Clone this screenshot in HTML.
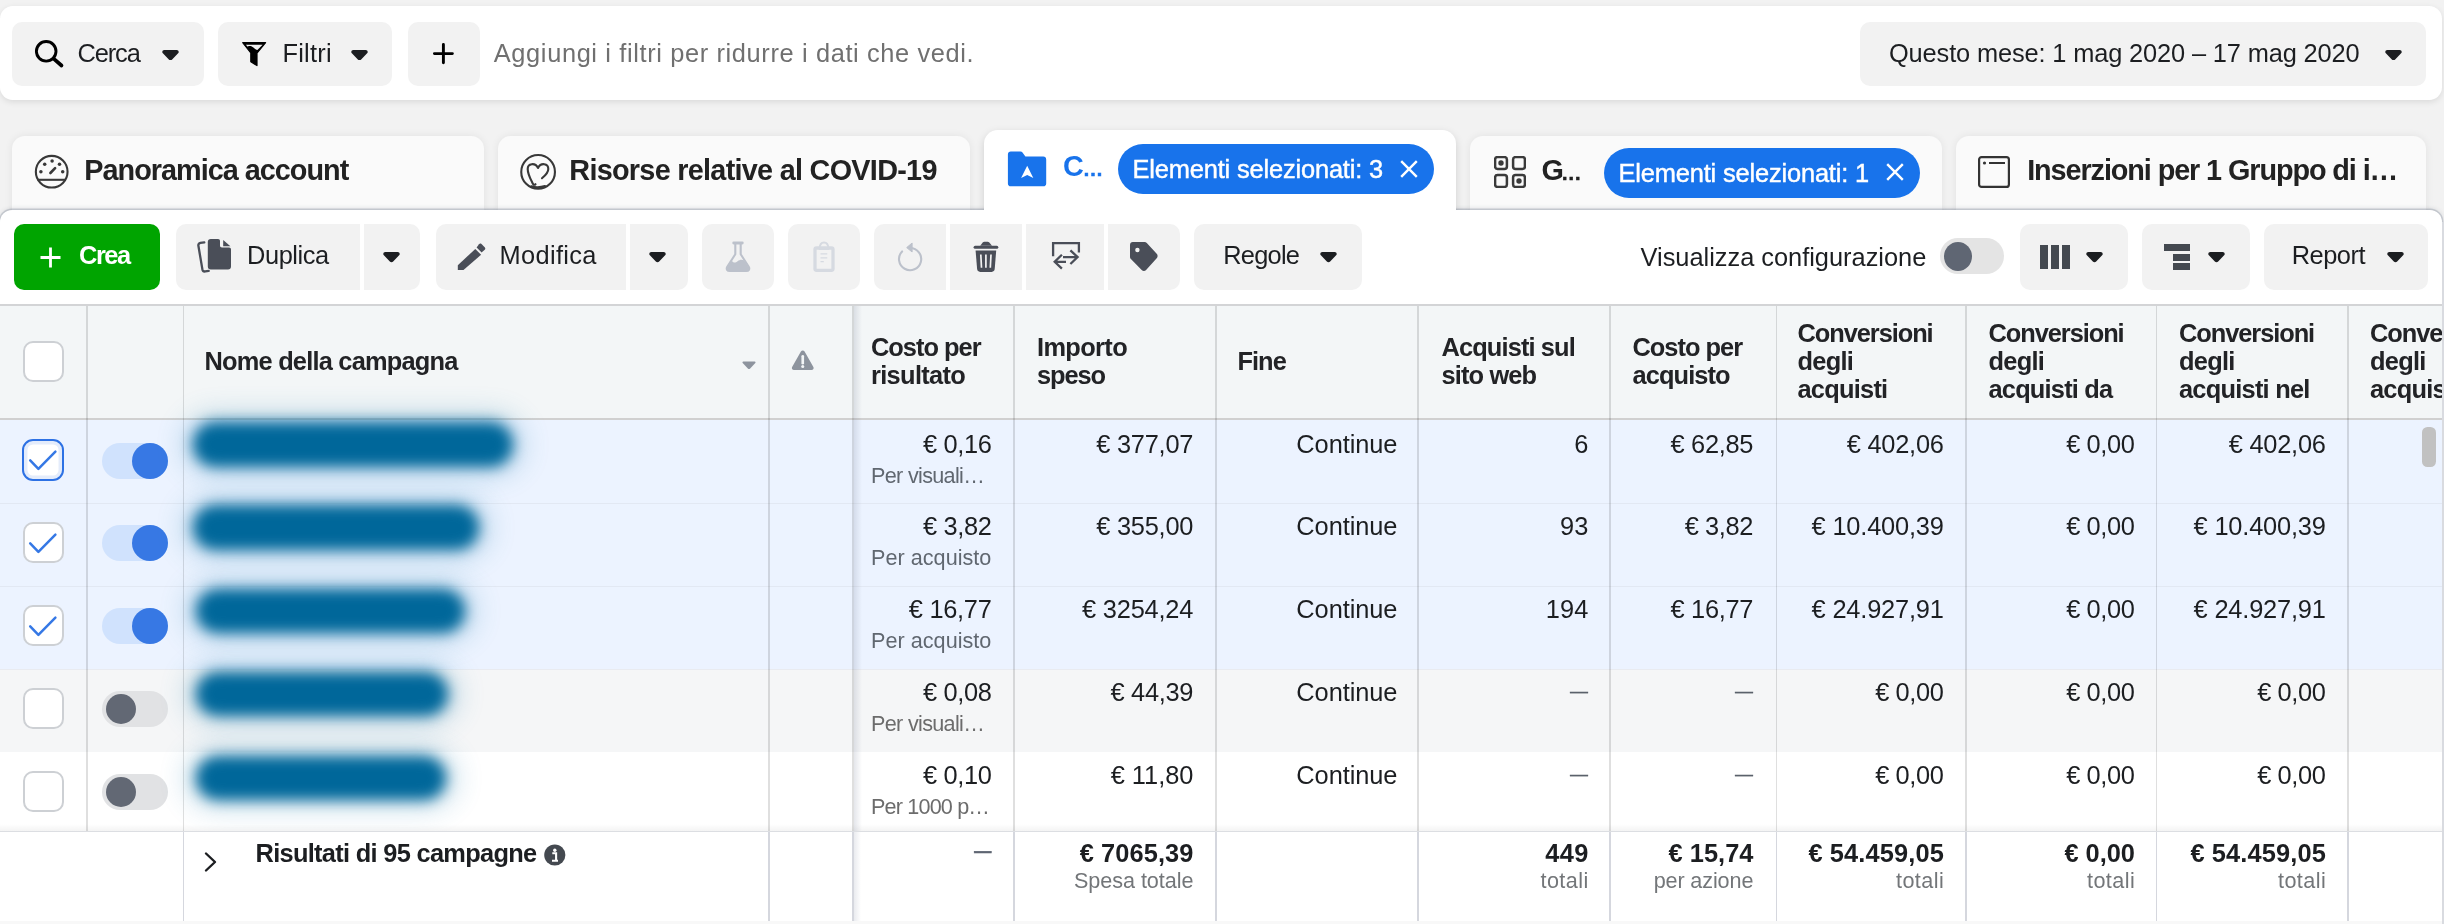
<!DOCTYPE html>
<html lang="it"><head><meta charset="utf-8"><title>Gestione inserzioni</title>
<style>
html,body{margin:0;padding:0;}
body{width:2444px;height:924px;overflow:hidden;background:#f2f2f2;font-family:"Liberation Sans",sans-serif;color:#1c1e21;}
#root{position:relative;width:2444px;height:924px;overflow:hidden;opacity:.999;}
#root div,#root svg{position:absolute;}
.t{position:absolute;white-space:pre;line-height:1;}

</style></head>
<body>
<div id="root">
<div style="left:0px;top:6px;width:2442px;height:94px;background:#fff;border-radius:13px;box-shadow:0 2px 6px rgba(0,0,0,.10);"></div>
<div style="left:12px;top:22px;width:192px;height:64px;background:#f2f2f2;border-radius:10px;"></div>
<div style="left:218px;top:22px;width:174px;height:64px;background:#f2f2f2;border-radius:10px;"></div>
<div style="left:408px;top:22px;width:72px;height:64px;background:#f2f2f2;border-radius:10px;"></div>
<div style="left:1860px;top:22px;width:566px;height:64px;background:#f2f2f2;border-radius:10px;"></div>
<svg style="left:162.30px;top:49.70px" width="17" height="10.4" viewBox="0 0 17.4 11" preserveAspectRatio="none"><path d="M2.400 0h12.600c1.900 0 2.800 2.100 1.500 3.500l-6.100 6.600c-0.900 1-2.500 1-3.400 0l-6.100-6.600C-0.400 2.100 0.500 0 2.400 0z" fill="#1c1e21"/></svg>
<svg style="left:351.30px;top:49.70px" width="17" height="10.4" viewBox="0 0 17.4 11" preserveAspectRatio="none"><path d="M2.400 0h12.600c1.900 0 2.800 2.100 1.500 3.500l-6.100 6.600c-0.900 1-2.500 1-3.400 0l-6.100-6.600C-0.400 2.100 0.500 0 2.400 0z" fill="#1c1e21"/></svg>
<svg style="left:2385.30px;top:49.70px" width="17" height="10.4" viewBox="0 0 17.4 11" preserveAspectRatio="none"><path d="M2.400 0h12.600c1.900 0 2.800 2.100 1.500 3.500l-6.100 6.600c-0.900 1-2.500 1-3.400 0l-6.100-6.600C-0.400 2.100 0.500 0 2.400 0z" fill="#1c1e21"/></svg>
<svg style="left:33px;top:39px" width="32" height="30" viewBox="33 39 32 30"><circle cx="46.200" cy="51.300" r="9.800" fill="none" stroke="#000" stroke-width="2.900"/><path d="M53.600 58.700L61.500 65.500" stroke="#000" stroke-width="3.700" stroke-linecap="round"/></svg>
<svg style="left:240px;top:40px" width="28" height="28" viewBox="240 40 28 28"><path d="M242.700 42.700h22.900l-8.600 10.300v12.600l-6.200-3.900v-8.700z" fill="#000" stroke="#000" stroke-width="1.200" stroke-linejoin="round"/><path d="M245.900 44.700h16.700l-5.200 5.400c-2.400-0.700-3.800-3.100-6-3.900-1.500-0.500-3.400-0.300-4 0.400z" fill="#f2f2f2"/></svg>
<svg style="left:431px;top:41px" width="25" height="25" viewBox="431 41 25 25"><path d="M443.400 44.400v18.400M434.400 53.600h18" stroke="#000" stroke-width="2.900" stroke-linecap="round"/></svg>
<div style="left:12px;top:136px;width:472px;height:80px;background:#fafafa;border-radius:13px 13px 0 0;box-shadow:0 0 9px rgba(0,0,0,.07);"></div>
<div style="left:498px;top:136px;width:472px;height:80px;background:#fafafa;border-radius:13px 13px 0 0;box-shadow:0 0 9px rgba(0,0,0,.07);"></div>
<div style="left:1470px;top:136px;width:472px;height:80px;background:#fafafa;border-radius:13px 13px 0 0;box-shadow:0 0 9px rgba(0,0,0,.07);"></div>
<div style="left:1956px;top:136px;width:470px;height:80px;background:#fafafa;border-radius:13px 13px 0 0;box-shadow:0 0 9px rgba(0,0,0,.07);"></div>
<div style="left:984px;top:129.5px;width:472px;height:86px;background:#fff;border-radius:14px 14px 0 0;box-shadow:0 3px 9px rgba(0,0,0,.15);"></div>
<div style="left:0px;top:210px;width:2442px;height:720px;background:#fff;border-radius:12px 12px 0 0;box-shadow:0 0 0 1.500px rgba(105,115,135,.26),0 -1px 5px rgba(60,70,90,.20);"></div>
<div style="left:984px;top:200px;width:472px;height:26px;background:#fff;border-radius:0;"></div>
<div style="left:1118px;top:144px;width:316px;height:49.5px;background:#1873eb;border-radius:25px;"></div>
<div style="left:1604px;top:148px;width:316px;height:49.5px;background:#1873eb;border-radius:25px;"></div>
<svg style="left:1400px;top:159.800px" width="18" height="18" viewBox="0 0 18 18"><path d="M1.2 1.2l15.6 15.6M16.8 1.2L1.2 16.8" stroke="#fff" stroke-width="2.4"/></svg>
<svg style="left:1886px;top:162.800px" width="18" height="18" viewBox="0 0 18 18"><path d="M1.2 1.2l15.6 15.6M16.8 1.2L1.2 16.8" stroke="#fff" stroke-width="2.4"/></svg>
<svg style="left:33px;top:153px" width="38" height="38" viewBox="33 153 38 38"><circle cx="51.700" cy="171.700" r="15.850" fill="none" stroke="#383838" stroke-width="2.100"/><path d="M37.500 179.800h28.400" stroke="#383838" stroke-width="2.100"/><path d="M50.400 173l4.700-4.800" stroke="#383838" stroke-width="2.600" stroke-linecap="round"/><g fill="#383838"><circle cx="40.900" cy="171.700" r="1.750"/><circle cx="44.700" cy="164.300" r="1.750"/><circle cx="52.100" cy="161.100" r="1.750"/><circle cx="59.500" cy="164.300" r="1.750"/><circle cx="62.700" cy="171.700" r="1.750"/></g></svg>
<svg style="left:518px;top:152px" width="40" height="40" viewBox="518 152 40 40"><circle cx="538.100" cy="171.900" r="16.850" fill="none" stroke="#383838" stroke-width="2.100"/><path d="M542 178.200c2.800-2.400 6.300-5.300 6.300-9.300 0-5.500-7.400-6.700-10.300-1-2.900-5.700-10.300-4.500-10.300 1 0 5.200 2.700 9.800 5.200 14.900 0.500 1.100 1.900 1.200 2.600 0.400M531.400 186.300c4 1.200 9.500 1 13.600-0.300" fill="none" stroke="#383838" stroke-width="2.100" stroke-linecap="round" stroke-linejoin="round"/></svg>
<svg style="left:1007px;top:150px" width="41" height="38" viewBox="1007 150 41 38"><path d="M1010.800 151.500h9.700c0.900 0 1.500 0.300 2 1l2.900 4h17.900c1.800 0 2.900 1.100 2.900 2.900v24.000c0 1.800-1.100 2.900-2.900 2.900h-32.500c-1.800 0-2.900-1.100-2.900-2.900v-29.000c0-1.800 1.100-2.900 2.900-2.900z" fill="#1873eb"/><path d="M1027.200 165.800l6.100 12.300-6.100-3-6.100 3z" fill="#fff"/></svg>
<svg style="left:1494px;top:156px" width="32" height="32" viewBox="0 0 32 32"><g fill="none" stroke="#3a3a3a" stroke-width="2.5"><rect x="1.1" y="1.1" width="11.800" height="11.800" rx="2.5"/><rect x="19.100" y="1.1" width="11.800" height="11.800" rx="2.5"/><rect x="1.1" y="19.100" width="11.800" height="11.800" rx="2.5"/><rect x="19.100" y="19.100" width="11.800" height="11.800" rx="2.5"/></g><circle cx="7" cy="7" r="2.700" fill="#3a3a3a"/><circle cx="25" cy="25" r="2.700" fill="#3a3a3a"/></svg>
<svg style="left:1978px;top:156px" width="32" height="32" viewBox="0 0 32 32"><rect x="1.1" y="1.1" width="29.800" height="29.800" rx="2.500" fill="none" stroke="#333" stroke-width="2.2"/><circle cx="6.500" cy="7" r="1.6" fill="#333"/><path d="M11 7h16" stroke="#333" stroke-width="2"/></svg>
<div style="left:14px;top:224px;width:146px;height:66px;background:#00a400;border-radius:10px;"></div>
<div style="left:176px;top:224px;width:184px;height:66px;background:#f2f2f2;border-radius:10px 0 0 10px;"></div>
<div style="left:364px;top:224px;width:56px;height:66px;background:#f2f2f2;border-radius:0 10px 10px 0;"></div>
<div style="left:436px;top:224px;width:190px;height:66px;background:#f2f2f2;border-radius:10px 0 0 10px;"></div>
<div style="left:630px;top:224px;width:58px;height:66px;background:#f2f2f2;border-radius:0 10px 10px 0;"></div>
<div style="left:702px;top:224px;width:72px;height:66px;background:#f2f2f2;border-radius:10px;"></div>
<div style="left:788px;top:224px;width:72px;height:66px;background:#f2f2f2;border-radius:10px;"></div>
<div style="left:874px;top:224px;width:72px;height:66px;background:#f2f2f2;border-radius:10px 0 0 10px;"></div>
<div style="left:950px;top:224px;width:72px;height:66px;background:#f2f2f2;border-radius:0;"></div>
<div style="left:1026px;top:224px;width:78px;height:66px;background:#f2f2f2;border-radius:0;"></div>
<div style="left:1108px;top:224px;width:72px;height:66px;background:#f2f2f2;border-radius:0 10px 10px 0;"></div>
<div style="left:1194px;top:224px;width:168px;height:66px;background:#f2f2f2;border-radius:10px;"></div>
<div style="left:2020px;top:224px;width:108px;height:66px;background:#f2f2f2;border-radius:10px;"></div>
<div style="left:2142px;top:224px;width:108px;height:66px;background:#f2f2f2;border-radius:10px;"></div>
<div style="left:2264px;top:224px;width:164px;height:66px;background:#f2f2f2;border-radius:10px;"></div>
<svg style="left:383.30px;top:252.20px" width="17" height="10.4" viewBox="0 0 17.4 11" preserveAspectRatio="none"><path d="M2.400 0h12.600c1.900 0 2.800 2.100 1.500 3.500l-6.100 6.600c-0.900 1-2.500 1-3.400 0l-6.100-6.600C-0.400 2.100 0.500 0 2.400 0z" fill="#1c1e21"/></svg>
<svg style="left:649.30px;top:252.20px" width="17" height="10.4" viewBox="0 0 17.4 11" preserveAspectRatio="none"><path d="M2.400 0h12.600c1.900 0 2.800 2.100 1.500 3.500l-6.100 6.600c-0.900 1-2.500 1-3.400 0l-6.100-6.600C-0.400 2.100 0.500 0 2.400 0z" fill="#1c1e21"/></svg>
<svg style="left:1320.30px;top:252.20px" width="17" height="10.4" viewBox="0 0 17.4 11" preserveAspectRatio="none"><path d="M2.400 0h12.600c1.900 0 2.800 2.100 1.500 3.500l-6.100 6.600c-0.900 1-2.500 1-3.400 0l-6.100-6.600C-0.400 2.100 0.500 0 2.400 0z" fill="#1c1e21"/></svg>
<svg style="left:2086.30px;top:252.20px" width="17" height="10.4" viewBox="0 0 17.4 11" preserveAspectRatio="none"><path d="M2.400 0h12.600c1.900 0 2.800 2.100 1.500 3.500l-6.100 6.600c-0.900 1-2.500 1-3.400 0l-6.100-6.600C-0.400 2.100 0.500 0 2.400 0z" fill="#1c1e21"/></svg>
<svg style="left:2208.30px;top:252.20px" width="17" height="10.4" viewBox="0 0 17.4 11" preserveAspectRatio="none"><path d="M2.400 0h12.600c1.900 0 2.800 2.100 1.500 3.500l-6.100 6.600c-0.900 1-2.500 1-3.400 0l-6.100-6.600C-0.400 2.100 0.500 0 2.400 0z" fill="#1c1e21"/></svg>
<svg style="left:2387.30px;top:252.20px" width="17" height="10.4" viewBox="0 0 17.4 11" preserveAspectRatio="none"><path d="M2.400 0h12.600c1.900 0 2.800 2.100 1.500 3.500l-6.100 6.600c-0.900 1-2.500 1-3.400 0l-6.100-6.600C-0.400 2.100 0.500 0 2.400 0z" fill="#1c1e21"/></svg>
<svg style="left:40px;top:247px" width="21" height="21" viewBox="0 0 21 21"><path d="M10.500 0.500v20M0.500 10.500h20" stroke="#fff" stroke-width="2.8"/></svg>
<div style="left:1940px;top:238px;width:64px;height:36px;background:#e4e4e4;border-radius:18px;"></div>
<div style="left:1944px;top:242px;width:28px;height:29px;background:#5f6673;border-radius:50%;"></div>
<div style="left:2040px;top:245px;width:8px;height:24px;background:#444950;border-radius:0;"></div>
<div style="left:2051px;top:245px;width:8px;height:24px;background:#444950;border-radius:0;"></div>
<div style="left:2062px;top:245px;width:8px;height:24px;background:#444950;border-radius:0;"></div>
<div style="left:2163.5px;top:244px;width:26.5px;height:7px;background:#444950;border-radius:0;"></div>
<div style="left:2173px;top:254px;width:17px;height:7.1px;background:#444950;border-radius:0;"></div>
<div style="left:2173px;top:262.9px;width:17px;height:7px;background:#444950;border-radius:0;"></div>
<svg style="left:195px;top:237px" width="40" height="38" viewBox="195 237 40 38"><path d="M210.800 239h7.200c1.300 0 2 0.700 2 2v4.500c0 1.300 0.700 2 2 2h7c1.300 0 2 0.700 2 2v17c0 1.900-1.100 3-3 3h-17.200c-1.900 0-3-1.100-3-3v-24.500c0-1.900 1.100-3 3-3z" fill="#4a4e58"/><path d="M223.200 240l7.200 6.300h-7.200z" fill="#4a4e58"/><path d="M204.300 242.300l-3.900 0.600c-1.500 0.300-2.300 1.400-2 2.900l4 23.600c0.300 1.500 1.400 2.300 2.900 2l3.400-0.500" fill="none" stroke="#4a4e58" stroke-width="2.300" stroke-linecap="round"/></svg>
<svg style="left:455px;top:240px" width="34" height="33" viewBox="455 240 34 33"><path d="M457.800 269.900v-4.600l17.500-16.400 5.800 5.900-17.600 15.100z" fill="#4a4e58"/><path d="M476.600 247.500l2.400-3.300c0.700-0.800 1.700-0.900 2.500-0.200l3.200 3.200c0.800 0.800 0.800 1.800 0 2.600l-3.100 2.600z" fill="#4a4e58"/></svg>
<svg style="left:723px;top:240px" width="30" height="34" viewBox="723 240 30 34"><path d="M733.700 243h8.600" stroke="#bcc1cb" stroke-width="2.800" stroke-linecap="round"/><path d="M735.300 243.500v10.800l-7.900 12.200c-1.500 2.500-0.300 4.500 2.400 4.500h16.400c2.700 0 3.900-2 2.400-4.500l-7.900-12.200v-10.800" fill="none" stroke="#bcc1cb" stroke-width="2.100" stroke-linejoin="round"/><path d="M731.800 260.500c1.500 3 4 2.300 5.800 0.700 2-1.700 4.300-2 6.400-0.900l5 7.700c1 1.900 0.300 3-1.700 3h-18.600c-2 0-2.700-1.100-1.700-3z" fill="#bcc1cb"/></svg>
<svg style="left:811px;top:240px" width="26" height="34" viewBox="811 240 26 34"><rect x="815" y="248" width="18" height="22.300" rx="1.500" fill="none" stroke="#d6dae1" stroke-width="3.300"/><path d="M819.600 249c0-4 1.500-6.500 4.400-6.500s4.400 2.500 4.400 6.500z" fill="none" stroke="#d6dae1" stroke-width="1.800"/><path d="M820.500 253.900h6.800M820.500 257.900h6.800M820.500 261.600h3.300" stroke="#d6dae1" stroke-width="1.400"/></svg>
<svg style="left:895px;top:240px" width="30" height="34" viewBox="895 240 30 34"><path d="M902.100 251.400a11.100 11.100 0 1 0 8-3.400" fill="none" stroke="#bcc1cb" stroke-width="2.100" stroke-linecap="round"/><path d="M912.100 243l-5.400 4.600 5.400 4.400z" fill="#bcc1cb" stroke="#bcc1cb" stroke-width="1" stroke-linejoin="round"/></svg>
<svg style="left:971px;top:240px" width="30" height="34" viewBox="971 240 30 34"><path d="M980.200 245.700l2.700-3.400c0.400-0.400 0.800-0.600 1.400-0.600h3.400c0.600 0 1 0.200 1.400 0.600l2.900 3.400z" fill="#4a4e58"/><rect x="973.600" y="245.700" width="24.700" height="3" rx="1.500" fill="#4a4e58"/><path d="M975.600 250.500h20.600l-1.500 18.600c-0.200 1.800-1.300 2.800-3 2.800h-11.600c-1.700 0-2.800-1-3-2.800z" fill="#4a4e58"/><path d="M980.800 254.500l0.700 13.300M985.900 254.500v13.300M991 254.500l-0.700 13.300" stroke="#f2f2f2" stroke-width="1.700"/></svg>
<svg style="left:1050px;top:240px" width="32" height="32" viewBox="1050 240 32 32"><g fill="none" stroke="#4a4e58" stroke-width="2.300"><path d="M1053.100 256.200v-13.100h25.800v9.300"/><path d="M1063 257.100h14.300M1070.400 250.300l7.200 6.800-7.200 6.900"/><path d="M1055 261.800h11M1061.900 254.800l-7.200 7 7.200 6.800"/></g></svg>
<svg style="left:1127px;top:240px" width="34" height="34" viewBox="1127 240 34 34"><path d="M1132.800 242.100h11.800c0.900 0 1.600 0.300 2.200 0.900l9.900 10.700c1.200 1.300 1.200 3.300 0 4.600l-10.600 11.800c-1.200 1.300-3.200 1.300-4.400 0l-10.800-11c-0.600-0.600-0.900-1.300-0.900-2.200v-12c0-1.700 1.100-2.800 2.800-2.800z" fill="#4a4e58"/><circle cx="1137.400" cy="250" r="2.200" fill="#f2f2f2"/></svg>
<div style="left:0px;top:304px;width:2442px;height:2px;background:#d3d4d6;border-radius:0;"></div>
<div style="left:0px;top:306px;width:2442px;height:112px;background:#f3f6f7;border-radius:0;"></div>
<div style="left:0px;top:417.9px;width:2442px;height:2.2px;background:#d0d0d0;border-radius:0;"></div>
<div style="left:0px;top:420px;width:2442px;height:83px;background:#ecf3ff;border-radius:0;"></div>
<div style="left:0px;top:503px;width:2442px;height:83px;background:#ecf3ff;border-radius:0;"></div>
<div style="left:0px;top:586px;width:2442px;height:83px;background:#ecf3ff;border-radius:0;"></div>
<div style="left:0px;top:669px;width:2442px;height:83px;background:#f5f6f7;border-radius:0;"></div>
<div style="left:0px;top:752px;width:2442px;height:83px;background:#fff;border-radius:0;"></div>
<div style="left:0px;top:502.5px;width:2442px;height:1px;background:#e2e8f3;border-radius:0;"></div>
<div style="left:0px;top:585.5px;width:2442px;height:1px;background:#e2e8f3;border-radius:0;"></div>
<div style="left:0px;top:668.8px;width:2442px;height:1px;background:#e9ebf0;border-radius:0;"></div>
<div style="left:86.25px;top:306px;width:1.5px;height:526px;background:rgba(0,0,0,.125);border-radius:0;"></div>
<div style="left:182.75px;top:306px;width:1.5px;height:618px;background:rgba(0,0,0,.125);border-radius:0;"></div>
<div style="left:768.25px;top:306px;width:1.5px;height:618px;background:rgba(0,0,0,.125);border-radius:0;"></div>
<div style="left:852.25px;top:306px;width:1.5px;height:618px;background:rgba(0,0,0,.125);border-radius:0;"></div>
<div style="left:1013.25px;top:306px;width:1.5px;height:618px;background:rgba(0,0,0,.125);border-radius:0;"></div>
<div style="left:1215.25px;top:306px;width:1.5px;height:618px;background:rgba(0,0,0,.125);border-radius:0;"></div>
<div style="left:1417.25px;top:306px;width:1.5px;height:618px;background:rgba(0,0,0,.125);border-radius:0;"></div>
<div style="left:1609.25px;top:306px;width:1.5px;height:618px;background:rgba(0,0,0,.125);border-radius:0;"></div>
<div style="left:1775.75px;top:306px;width:1.5px;height:618px;background:rgba(0,0,0,.125);border-radius:0;"></div>
<div style="left:1965.25px;top:306px;width:1.5px;height:618px;background:rgba(0,0,0,.125);border-radius:0;"></div>
<div style="left:2155.75px;top:306px;width:1.5px;height:618px;background:rgba(0,0,0,.125);border-radius:0;"></div>
<div style="left:2347.25px;top:306px;width:1.5px;height:618px;background:rgba(0,0,0,.125);border-radius:0;"></div>
<div style="left:853.75px;top:306px;width:8px;height:618px;background:linear-gradient(90deg,rgba(90,100,130,.16),rgba(90,100,130,0));border-radius:0;"></div>
<svg style="left:742px;top:361px" width="14" height="9" viewBox="0 0 14 9"><path d="M1.300 0.500h11.400c0.800 0 1.100 0.800 0.600 1.400l-5.400 5.800c-0.500 0.500-1.300 0.500-1.800 0L0.700 1.900C0.200 1.300 0.500 0.500 1.300 0.500z" fill="#8d949e"/></svg>
<svg style="left:791.200px;top:350px" width="23.500" height="21" viewBox="0 0 23 21" preserveAspectRatio="none"><path d="M9.700 1.600c0.800-1.400 2.800-1.400 3.600 0l8.600 15.400c0.800 1.400-0.200 3-1.800 3h-17.200c-1.600 0-2.600-1.600-1.800-3z" fill="#8d949e"/><path d="M11.500 6.300v7" stroke="#f3f6f7" stroke-width="2.600" stroke-linecap="round"/><circle cx="11.500" cy="16.600" r="1.500" fill="#f3f6f7"/></svg>
<div style="left:22.500px;top:340.50px;width:41px;height:41px;box-sizing:border-box;border:2px solid #cdd0d4;border-radius:10px;background:#fff;"></div>
<div style="left:22px;top:439.00px;width:42px;height:42px;box-sizing:border-box;border:2.300px solid #2d71e4;border-radius:11px;background:#fff;box-shadow:inset 0 0 0 3.500px #e4ecfb;"></div>
<svg style="left:22px;top:439.00px" width="42" height="42" viewBox="0 0 42 42"><path d="M8.200 21.300l8.200 8.600L33.400 12.600" fill="none" stroke="#3578e5" stroke-width="2.500" stroke-linecap="round" stroke-linejoin="round"/></svg>
<div style="left:102px;top:442.8px;width:66px;height:36px;background:#d0e2fd;border-radius:18px;"></div>
<div style="left:132px;top:442.8px;width:36px;height:36px;background:#3778e4;border-radius:50%;"></div>
<div style="left:22.500px;top:522.00px;width:41px;height:41px;box-sizing:border-box;border:2px solid #cdd0d4;border-radius:10px;background:#fff;"></div>
<svg style="left:22px;top:521.50px" width="42" height="42" viewBox="0 0 42 42"><path d="M8.200 21.300l8.200 8.600L33.400 12.600" fill="none" stroke="#3578e5" stroke-width="2.500" stroke-linecap="round" stroke-linejoin="round"/></svg>
<div style="left:102px;top:525.3px;width:66px;height:36px;background:#d0e2fd;border-radius:18px;"></div>
<div style="left:132px;top:525.3px;width:36px;height:36px;background:#3778e4;border-radius:50%;"></div>
<div style="left:22.500px;top:605.00px;width:41px;height:41px;box-sizing:border-box;border:2px solid #cdd0d4;border-radius:10px;background:#fff;"></div>
<svg style="left:22px;top:604.50px" width="42" height="42" viewBox="0 0 42 42"><path d="M8.200 21.300l8.200 8.600L33.400 12.600" fill="none" stroke="#3578e5" stroke-width="2.500" stroke-linecap="round" stroke-linejoin="round"/></svg>
<div style="left:102px;top:608.3px;width:66px;height:36px;background:#d0e2fd;border-radius:18px;"></div>
<div style="left:132px;top:608.3px;width:36px;height:36px;background:#3778e4;border-radius:50%;"></div>
<div style="left:22.500px;top:688.00px;width:41px;height:41px;box-sizing:border-box;border:2px solid #cdd0d4;border-radius:10px;background:#fff;"></div>
<div style="left:102px;top:691.3px;width:66px;height:35.5px;background:#e1e2e4;border-radius:18px;"></div>
<div style="left:106px;top:694.3px;width:30px;height:30px;background:#626874;border-radius:50%;"></div>
<div style="left:22.500px;top:771.00px;width:41px;height:41px;box-sizing:border-box;border:2px solid #cdd0d4;border-radius:10px;background:#fff;"></div>
<div style="left:102px;top:774.3px;width:66px;height:35.5px;background:#e1e2e4;border-radius:18px;"></div>
<div style="left:106px;top:777.3px;width:30px;height:30px;background:#626874;border-radius:50%;"></div>
<div style="left:182.5px;top:414px;width:340.5px;height:61px;background:#2e86b3;opacity:.28;border-radius:30px;filter:blur(14px)"></div>
<div style="left:192.5px;top:422px;width:320.5px;height:45px;background:#00679a;border-radius:23px;filter:blur(7px)"></div>
<div style="left:182.5px;top:497px;width:306px;height:61px;background:#2e86b3;opacity:.28;border-radius:30px;filter:blur(14px)"></div>
<div style="left:192.5px;top:505px;width:286px;height:45px;background:#00679a;border-radius:23px;filter:blur(7px)"></div>
<div style="left:186px;top:580.5px;width:288.5px;height:60px;background:#2e86b3;opacity:.28;border-radius:30px;filter:blur(14px)"></div>
<div style="left:196px;top:588.5px;width:268.5px;height:44px;background:#00679a;border-radius:23px;filter:blur(7px)"></div>
<div style="left:186px;top:664px;width:271.5px;height:59.5px;background:#2e86b3;opacity:.28;border-radius:30px;filter:blur(14px)"></div>
<div style="left:196px;top:672px;width:251.5px;height:43.5px;background:#00679a;border-radius:23px;filter:blur(7px)"></div>
<div style="left:186px;top:748px;width:270px;height:60px;background:#2e86b3;opacity:.28;border-radius:30px;filter:blur(14px)"></div>
<div style="left:196px;top:756px;width:250px;height:44px;background:#00679a;border-radius:23px;filter:blur(7px)"></div>
<div style="left:0px;top:824px;width:2442px;height:8px;background:linear-gradient(180deg,rgba(0,0,0,0),rgba(0,0,0,.05));border-radius:0;"></div>
<div style="left:0px;top:831px;width:2442px;height:93px;background:#fff;border-radius:0;"></div>
<div style="left:0px;top:830.5px;width:2442px;height:1.5px;background:#dcdee2;border-radius:0;"></div>
<div style="left:182.75px;top:832px;width:1.5px;height:92px;background:#d5d7de;border-radius:0;"></div>
<div style="left:768.25px;top:832px;width:1.5px;height:92px;background:#d5d7de;border-radius:0;"></div>
<div style="left:852.25px;top:832px;width:1.5px;height:92px;background:#d5d7de;border-radius:0;"></div>
<div style="left:1013.25px;top:832px;width:1.5px;height:92px;background:#d5d7de;border-radius:0;"></div>
<div style="left:1215.25px;top:832px;width:1.5px;height:92px;background:#d5d7de;border-radius:0;"></div>
<div style="left:1417.25px;top:832px;width:1.5px;height:92px;background:#d5d7de;border-radius:0;"></div>
<div style="left:1609.25px;top:832px;width:1.5px;height:92px;background:#d5d7de;border-radius:0;"></div>
<div style="left:1775.75px;top:832px;width:1.5px;height:92px;background:#d5d7de;border-radius:0;"></div>
<div style="left:1965.25px;top:832px;width:1.5px;height:92px;background:#d5d7de;border-radius:0;"></div>
<div style="left:2155.75px;top:832px;width:1.5px;height:92px;background:#d5d7de;border-radius:0;"></div>
<div style="left:2347.25px;top:832px;width:1.5px;height:92px;background:#d5d7de;border-radius:0;"></div>
<div style="left:853.75px;top:832px;width:7px;height:92px;background:linear-gradient(90deg,rgba(90,100,130,.13),rgba(90,100,130,0));border-radius:0;"></div>
<svg style="left:203px;top:851px" width="16" height="22" viewBox="0 0 16 22"><path d="M3 2.500l9 8.500-9 8.500" fill="none" stroke="#1c1e21" stroke-width="2.400" stroke-linecap="round" stroke-linejoin="round"/></svg>
<svg style="left:543.800px;top:843.800px" width="22" height="22" viewBox="0 0 22 22"><circle cx="10.800" cy="11" r="10.600" fill="#444950"/><circle cx="10.800" cy="6.200" r="1.700" fill="#fff"/><path d="M8.300 9.300h3.800v7.300M8 16.700h6" stroke="#fff" stroke-width="2.100" fill="none"/></svg>
<div style="left:0px;top:921px;width:2442px;height:3px;background:#f8f8f8;border-radius:0;"></div>
<div style="left:2422px;top:427px;width:14px;height:40px;background:#c1c1c1;border-radius:5.500px;"></div>
<span class="t" style="top:41.20px;font-size:25.4px;letter-spacing:-1.134px;left:77.60px;">Cerca</span>
<span class="t" style="top:41.00px;font-size:25.4px;letter-spacing:0.253px;left:282.40px;">Filtri</span>
<span class="t" style="top:40.50px;font-size:25.4px;letter-spacing:0.628px;color:#707070;left:493.80px;">Aggiungi i filtri per ridurre i dati che vedi.</span>
<span class="t" style="top:41.25px;font-size:25.4px;letter-spacing:-0.140px;left:1889.00px;">Questo mese: 1 mag 2020 – 17 mag 2020</span>
<span class="t" style="top:156.32px;font-size:28.8px;letter-spacing:-0.985px;font-weight:700;color:#222;left:84.30px;">Panoramica account</span>
<span class="t" style="top:156.32px;font-size:28.8px;letter-spacing:-0.712px;font-weight:700;color:#222;left:569.30px;">Risorse relative al COVID-19</span>
<span class="t" style="top:151.62px;font-size:28.8px;letter-spacing:-1.953px;font-weight:700;color:#1873eb;left:1063.00px;">C<span style="font-size:20.500px;margin-left:0.900px;-webkit-text-stroke:.5px #1873eb">…</span></span>
<span class="t" style="top:155.92px;font-size:28.8px;letter-spacing:-2.766px;font-weight:700;color:#222;left:1541.50px;">G<span style="font-size:20.500px;margin-left:-0.200px;-webkit-text-stroke:.5px #222">…</span></span>
<span class="t" style="top:156.32px;font-size:28.8px;letter-spacing:-1.087px;font-weight:700;color:#222;left:2027.20px;">Inserzioni per 1 Gruppo di i…</span>
<span class="t" style="top:156.60px;font-size:25.4px;letter-spacing:-0.154px;color:#fff;left:1132.50px;-webkit-text-stroke:.45px #fff;">Elementi selezionati: 3</span>
<span class="t" style="top:160.60px;font-size:25.4px;letter-spacing:-0.154px;color:#fff;left:1618.50px;-webkit-text-stroke:.45px #fff;">Elementi selezionati: 1</span>
<span class="t" style="top:242.50px;font-size:25.4px;letter-spacing:-1.451px;font-weight:700;color:#fff;left:79.00px;">Crea</span>
<span class="t" style="top:242.50px;font-size:25.4px;letter-spacing:-0.406px;left:247.00px;">Duplica</span>
<span class="t" style="top:242.50px;font-size:25.4px;letter-spacing:0.350px;left:499.50px;">Modifica</span>
<span class="t" style="top:243.00px;font-size:25.4px;letter-spacing:-0.753px;left:1223.20px;">Regole</span>
<span class="t" style="top:245.00px;font-size:25.4px;letter-spacing:-0.016px;left:1640.60px;">Visualizza configurazione</span>
<span class="t" style="top:243.00px;font-size:25.4px;letter-spacing:-0.477px;left:2291.70px;">Report</span>
<span class="t" style="top:348.80px;font-size:25.4px;letter-spacing:-0.790px;font-weight:700;color:#222326;left:204.50px;">Nome della campagna</span>
<span class="t" style="top:335.00px;font-size:25.4px;letter-spacing:-0.997px;font-weight:700;color:#222326;left:871.00px;">Costo per</span>
<span class="t" style="top:363.00px;font-size:25.4px;letter-spacing:-0.662px;font-weight:700;color:#222326;left:871.00px;">risultato</span>
<span class="t" style="top:335.00px;font-size:25.4px;letter-spacing:-0.642px;font-weight:700;color:#222326;left:1037.00px;">Importo</span>
<span class="t" style="top:363.00px;font-size:25.4px;letter-spacing:-1.076px;font-weight:700;color:#222326;left:1037.00px;">speso</span>
<span class="t" style="top:348.80px;font-size:25.4px;letter-spacing:-0.971px;font-weight:700;color:#222326;left:1237.50px;">Fine</span>
<span class="t" style="top:335.00px;font-size:25.4px;letter-spacing:-0.876px;font-weight:700;color:#222326;left:1441.50px;">Acquisti sul</span>
<span class="t" style="top:363.00px;font-size:25.4px;letter-spacing:-0.855px;font-weight:700;color:#222326;left:1441.50px;">sito web</span>
<span class="t" style="top:335.00px;font-size:25.4px;letter-spacing:-0.997px;font-weight:700;color:#222326;left:1632.50px;">Costo per</span>
<span class="t" style="top:363.00px;font-size:25.4px;letter-spacing:-0.909px;font-weight:700;color:#222326;left:1632.50px;">acquisto</span>
<span class="t" style="top:320.50px;font-size:25.4px;letter-spacing:-1.056px;font-weight:700;color:#222326;left:1797.50px;">Conversioni</span>
<span class="t" style="top:348.50px;font-size:25.4px;letter-spacing:-0.727px;font-weight:700;color:#222326;left:1797.50px;">degli</span>
<span class="t" style="top:376.50px;font-size:25.4px;letter-spacing:-0.757px;font-weight:700;color:#222326;left:1797.50px;">acquisti</span>
<span class="t" style="top:320.50px;font-size:25.4px;letter-spacing:-1.056px;font-weight:700;color:#222326;left:1988.50px;">Conversioni</span>
<span class="t" style="top:348.50px;font-size:25.4px;letter-spacing:-0.727px;font-weight:700;color:#222326;left:1988.50px;">degli</span>
<span class="t" style="top:376.50px;font-size:25.4px;letter-spacing:-0.797px;font-weight:700;color:#222326;left:1988.50px;">acquisti da</span>
<span class="t" style="top:320.50px;font-size:25.4px;letter-spacing:-1.056px;font-weight:700;color:#222326;left:2179.00px;">Conversioni</span>
<span class="t" style="top:348.50px;font-size:25.4px;letter-spacing:-0.727px;font-weight:700;color:#222326;left:2179.00px;">degli</span>
<span class="t" style="top:376.50px;font-size:25.4px;letter-spacing:-0.756px;font-weight:700;color:#222326;left:2179.00px;">acquisti nel</span>
<span class="t" style="top:320.50px;font-size:25.4px;letter-spacing:-1.056px;font-weight:700;color:#222326;left:2370.00px;">Conversioni</span>
<span class="t" style="top:348.50px;font-size:25.4px;letter-spacing:-0.727px;font-weight:700;color:#222326;left:2370.00px;">degli</span>
<span class="t" style="top:376.50px;font-size:25.4px;letter-spacing:-0.757px;font-weight:700;color:#222326;left:2370.00px;">acquisti</span>
<span class="t" style="top:431.60px;font-size:25.4px;letter-spacing:-0.370px;right:1452.57px;">€ 0,16</span>
<span class="t" style="top:464.82px;font-size:21.6px;letter-spacing:-0.678px;color:#606770;left:871.00px;">Per visuali…</span>
<span class="t" style="top:431.60px;font-size:25.4px;letter-spacing:-0.240px;right:1250.84px;">€ 377,07</span>
<span class="t" style="top:431.60px;font-size:25.4px;letter-spacing:-0.080px;right:1046.68px;">Continue</span>
<span class="t" style="top:431.60px;font-size:25.4px;letter-spacing:0.156px;right:855.44px;">6</span>
<span class="t" style="top:431.60px;font-size:25.4px;letter-spacing:-0.295px;right:690.89px;">€ 62,85</span>
<span class="t" style="top:431.60px;font-size:25.4px;letter-spacing:-0.240px;right:500.34px;">€ 402,06</span>
<span class="t" style="top:431.60px;font-size:25.4px;letter-spacing:-0.370px;right:309.47px;">€ 0,00</span>
<span class="t" style="top:431.60px;font-size:25.4px;letter-spacing:-0.240px;right:118.34px;">€ 402,06</span>
<span class="t" style="top:514.10px;font-size:25.4px;letter-spacing:-0.370px;right:1452.57px;">€ 3,82</span>
<span class="t" style="top:547.32px;font-size:21.6px;letter-spacing:0.031px;color:#606770;left:871.00px;">Per acquisto</span>
<span class="t" style="top:514.10px;font-size:25.4px;letter-spacing:-0.240px;right:1250.84px;">€ 355,00</span>
<span class="t" style="top:514.10px;font-size:25.4px;letter-spacing:-0.080px;right:1046.68px;">Continue</span>
<span class="t" style="top:514.10px;font-size:25.4px;letter-spacing:0.148px;right:855.45px;">93</span>
<span class="t" style="top:514.10px;font-size:25.4px;letter-spacing:-0.370px;right:690.97px;">€ 3,82</span>
<span class="t" style="top:514.10px;font-size:25.4px;letter-spacing:-0.180px;right:500.28px;">€ 10.400,39</span>
<span class="t" style="top:514.10px;font-size:25.4px;letter-spacing:-0.370px;right:309.47px;">€ 0,00</span>
<span class="t" style="top:514.10px;font-size:25.4px;letter-spacing:-0.180px;right:118.28px;">€ 10.400,39</span>
<span class="t" style="top:597.10px;font-size:25.4px;letter-spacing:-0.295px;right:1452.49px;">€ 16,77</span>
<span class="t" style="top:630.32px;font-size:21.6px;letter-spacing:0.031px;color:#606770;left:871.00px;">Per acquisto</span>
<span class="t" style="top:597.10px;font-size:25.4px;letter-spacing:-0.198px;right:1250.80px;">€ 3254,24</span>
<span class="t" style="top:597.10px;font-size:25.4px;letter-spacing:-0.080px;right:1046.68px;">Continue</span>
<span class="t" style="top:597.10px;font-size:25.4px;letter-spacing:0.146px;right:855.45px;">194</span>
<span class="t" style="top:597.10px;font-size:25.4px;letter-spacing:-0.295px;right:690.89px;">€ 16,77</span>
<span class="t" style="top:597.10px;font-size:25.4px;letter-spacing:-0.180px;right:500.28px;">€ 24.927,91</span>
<span class="t" style="top:597.10px;font-size:25.4px;letter-spacing:-0.370px;right:309.47px;">€ 0,00</span>
<span class="t" style="top:597.10px;font-size:25.4px;letter-spacing:-0.180px;right:118.28px;">€ 24.927,91</span>
<span class="t" style="top:680.10px;font-size:25.4px;letter-spacing:-0.370px;right:1452.57px;">€ 0,08</span>
<span class="t" style="top:713.32px;font-size:21.6px;letter-spacing:-0.678px;color:#6c6c6c;left:871.00px;">Per visuali…</span>
<span class="t" style="top:680.10px;font-size:25.4px;letter-spacing:-0.295px;right:1250.89px;">€ 44,39</span>
<span class="t" style="top:680.10px;font-size:25.4px;letter-spacing:-0.080px;right:1046.68px;">Continue</span>
<span class="t" style="top:681.76px;font-size:18px;color:#5a616b;right:856.10px;-webkit-text-stroke:.3px #5a616b;">—</span>
<span class="t" style="top:681.76px;font-size:18px;color:#5a616b;right:691.10px;-webkit-text-stroke:.3px #5a616b;">—</span>
<span class="t" style="top:680.10px;font-size:25.4px;letter-spacing:-0.370px;right:500.47px;">€ 0,00</span>
<span class="t" style="top:680.10px;font-size:25.4px;letter-spacing:-0.370px;right:309.47px;">€ 0,00</span>
<span class="t" style="top:680.10px;font-size:25.4px;letter-spacing:-0.370px;right:118.47px;">€ 0,00</span>
<span class="t" style="top:763.10px;font-size:25.4px;letter-spacing:-0.370px;right:1452.57px;">€ 0,10</span>
<span class="t" style="top:796.32px;font-size:21.6px;letter-spacing:-0.832px;color:#6c6c6c;left:871.00px;">Per 1000 p…</span>
<span class="t" style="top:763.10px;font-size:25.4px;letter-spacing:-0.027px;right:1250.63px;">€ 11,80</span>
<span class="t" style="top:763.10px;font-size:25.4px;letter-spacing:-0.080px;right:1046.68px;">Continue</span>
<span class="t" style="top:764.76px;font-size:18px;color:#5a616b;right:856.10px;-webkit-text-stroke:.3px #5a616b;">—</span>
<span class="t" style="top:764.76px;font-size:18px;color:#5a616b;right:691.10px;-webkit-text-stroke:.3px #5a616b;">—</span>
<span class="t" style="top:763.10px;font-size:25.4px;letter-spacing:-0.370px;right:500.47px;">€ 0,00</span>
<span class="t" style="top:763.10px;font-size:25.4px;letter-spacing:-0.370px;right:309.47px;">€ 0,00</span>
<span class="t" style="top:763.10px;font-size:25.4px;letter-spacing:-0.370px;right:118.47px;">€ 0,00</span>
<span class="t" style="top:840.70px;font-size:25.4px;letter-spacing:-0.698px;font-weight:700;left:255.50px;">Risultati di 95 campagne</span>
<span class="t" style="top:843.41px;font-size:17px;font-weight:700;color:#5f6673;right:1452.70px;-webkit-text-stroke:.7px #5f6673;">—</span>
<span class="t" style="top:840.70px;font-size:25.4px;letter-spacing:0.097px;font-weight:700;right:1250.50px;">€ 7065,39</span>
<span class="t" style="top:869.82px;font-size:21.6px;letter-spacing:-0.061px;color:#737679;right:1250.66px;">Spesa totale</span>
<span class="t" style="top:840.70px;font-size:25.4px;letter-spacing:0.443px;font-weight:700;right:855.16px;">449</span>
<span class="t" style="top:869.82px;font-size:21.6px;letter-spacing:0.477px;color:#737679;right:855.12px;">totali</span>
<span class="t" style="top:840.70px;font-size:25.4px;letter-spacing:0.025px;font-weight:700;right:690.57px;">€ 15,74</span>
<span class="t" style="top:869.82px;font-size:21.6px;letter-spacing:-0.119px;color:#737679;right:690.72px;">per azione</span>
<span class="t" style="top:840.70px;font-size:25.4px;letter-spacing:0.137px;font-weight:700;right:499.96px;">€ 54.459,05</span>
<span class="t" style="top:869.82px;font-size:21.6px;letter-spacing:0.477px;color:#737679;right:499.62px;">totali</span>
<span class="t" style="top:840.70px;font-size:25.4px;letter-spacing:-0.029px;font-weight:700;right:309.13px;">€ 0,00</span>
<span class="t" style="top:869.82px;font-size:21.6px;letter-spacing:0.477px;color:#737679;right:308.62px;">totali</span>
<span class="t" style="top:840.70px;font-size:25.4px;letter-spacing:0.137px;font-weight:700;right:117.96px;">€ 54.459,05</span>
<span class="t" style="top:869.82px;font-size:21.6px;letter-spacing:0.477px;color:#737679;right:117.62px;">totali</span>
<div style="left:2442px;top:222px;width:2px;height:702px;background:#d9dbe0"></div>
</div>
</body></html>
